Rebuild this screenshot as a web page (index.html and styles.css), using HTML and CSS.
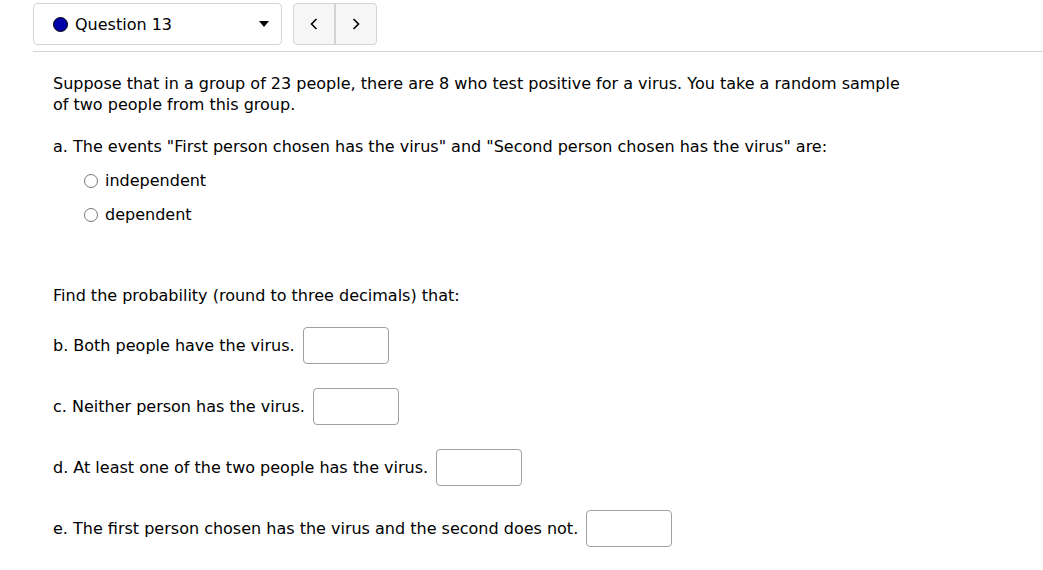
FILE: index.html
```html
<!DOCTYPE html>
<html>
<head>
<meta charset="utf-8">
<link rel="stylesheet" href="styles.css">
</head>
<body>
<div class="header">
  <div class="select">
    <span class="dot"></span>
    <span class="sel-label">Question 13</span>
    <span class="caret"></span>
  </div>
  <div class="nav">
    <button class="nav-btn"><svg width="8" height="12" viewBox="0 0 8 12"><path d="M6.5 1 L1.5 6 L6.5 11" fill="none" stroke="#000" stroke-width="1.6"/></svg></button>
    <button class="nav-btn"><svg width="8" height="12" viewBox="0 0 8 12"><path d="M1.5 1 L6.5 6 L1.5 11" fill="none" stroke="#000" stroke-width="1.6"/></svg></button>
  </div>
</div>
<div class="rule"></div>
<div class="question">
  <p class="intro">Suppose that in a group of 23 people, there are 8 who test positive for a virus. You take a random sample of two people from this group.</p>
  <p class="part-a">a. The events "First person chosen has the virus" and "Second person chosen has the virus" are:</p>
  <div class="options">
    <label class="option"><span class="radio"></span>independent</label>
    <label class="option"><span class="radio"></span>dependent</label>
  </div>
  <p class="find">Find the probability (round to three decimals) that:</p>
  <div class="answers">
    <div class="answer"><span>b. Both people have the virus.</span><input class="box" type="text"></div>
    <div class="answer"><span>c. Neither person has the virus.</span><input class="box" type="text"></div>
    <div class="answer"><span>d. At least one of the two people has the virus.</span><input class="box" type="text"></div>
    <div class="answer"><span>e. The first person chosen has the virus and the second does not.</span><input class="box" type="text"></div>
  </div>
</div>
</body>
</html>
```
FILE: styles.css
```css
html, body {
  margin: 0;
  padding: 0;
  background: #fff;
}
body {
  font-family: "DejaVu Sans", sans-serif;
  font-size: 16px;
  color: #000;
  width: 1043px;
  height: 570px;
  overflow: hidden;
}
.header {
  display: flex;
  gap: 11px;
  padding: 3px 0 0 33px;
  height: 42px;
}
.select {
  box-sizing: border-box;
  width: 249px;
  height: 42px;
  border: 1px solid #d4d4d4;
  border-radius: 4px;
  display: flex;
  align-items: center;
  padding-left: 19px;
  padding-right: 10px;
}
.dot {
  box-sizing: border-box;
  width: 15px;
  height: 15px;
  border-radius: 50%;
  background: #0000a8;
  border: 1.5px solid #000;
  margin-right: 7px;
}
.sel-label {
  flex: 1;
}
.caret {
  width: 0;
  height: 0;
  border-left: 5px solid transparent;
  border-right: 5px solid transparent;
  border-top: 6px solid #000;
  margin-right: 2px;
}
.nav {
  display: flex;
  box-sizing: border-box;
  width: 84px;
  height: 42px;
  border: 1px solid #d4d4d4;
  border-radius: 4px;
  background: #f6f6f6;
  overflow: hidden;
}
.nav-btn {
  flex: 1;
  border: none;
  background: transparent;
  display: flex;
  align-items: center;
  justify-content: center;
  padding: 0;
}
.nav-btn + .nav-btn {
  border-left: 2px solid #d4d4d4;
}
.rule {
  margin: 6px 0 0 33px;
  height: 1px;
  background: #d4d4d4;
}
.question {
  padding-left: 53px;
  line-height: 21px;
}
.question p {
  margin: 0;
}
.intro {
  max-width: 860px;
  margin-top: 21px !important;
}
.part-a {
  margin-top: 21px !important;
}
.options {
  display: flex;
  flex-direction: column;
  gap: 13px;
  margin-top: 13px;
  padding-left: 31px;
}
.option {
  display: flex;
  align-items: center;
  gap: 7px;
  height: 21px;
}
.radio {
  box-sizing: border-box;
  width: 14px;
  height: 14px;
  border: 1px solid #767676;
  border-radius: 50%;
  background: #fff;
}
.find {
  margin-top: 60px !important;
}
.answers {
  display: flex;
  flex-direction: column;
  gap: 24px;
  margin-top: 21px;
}
.answer {
  display: flex;
  align-items: center;
  gap: 8px;
  height: 37px;
}
.box {
  box-sizing: border-box;
  width: 86px;
  height: 37px;
  border: 1px solid #a0a0a0;
  border-radius: 4px;
  margin: 0;
  padding: 0;
  background: #fff;
}
```
